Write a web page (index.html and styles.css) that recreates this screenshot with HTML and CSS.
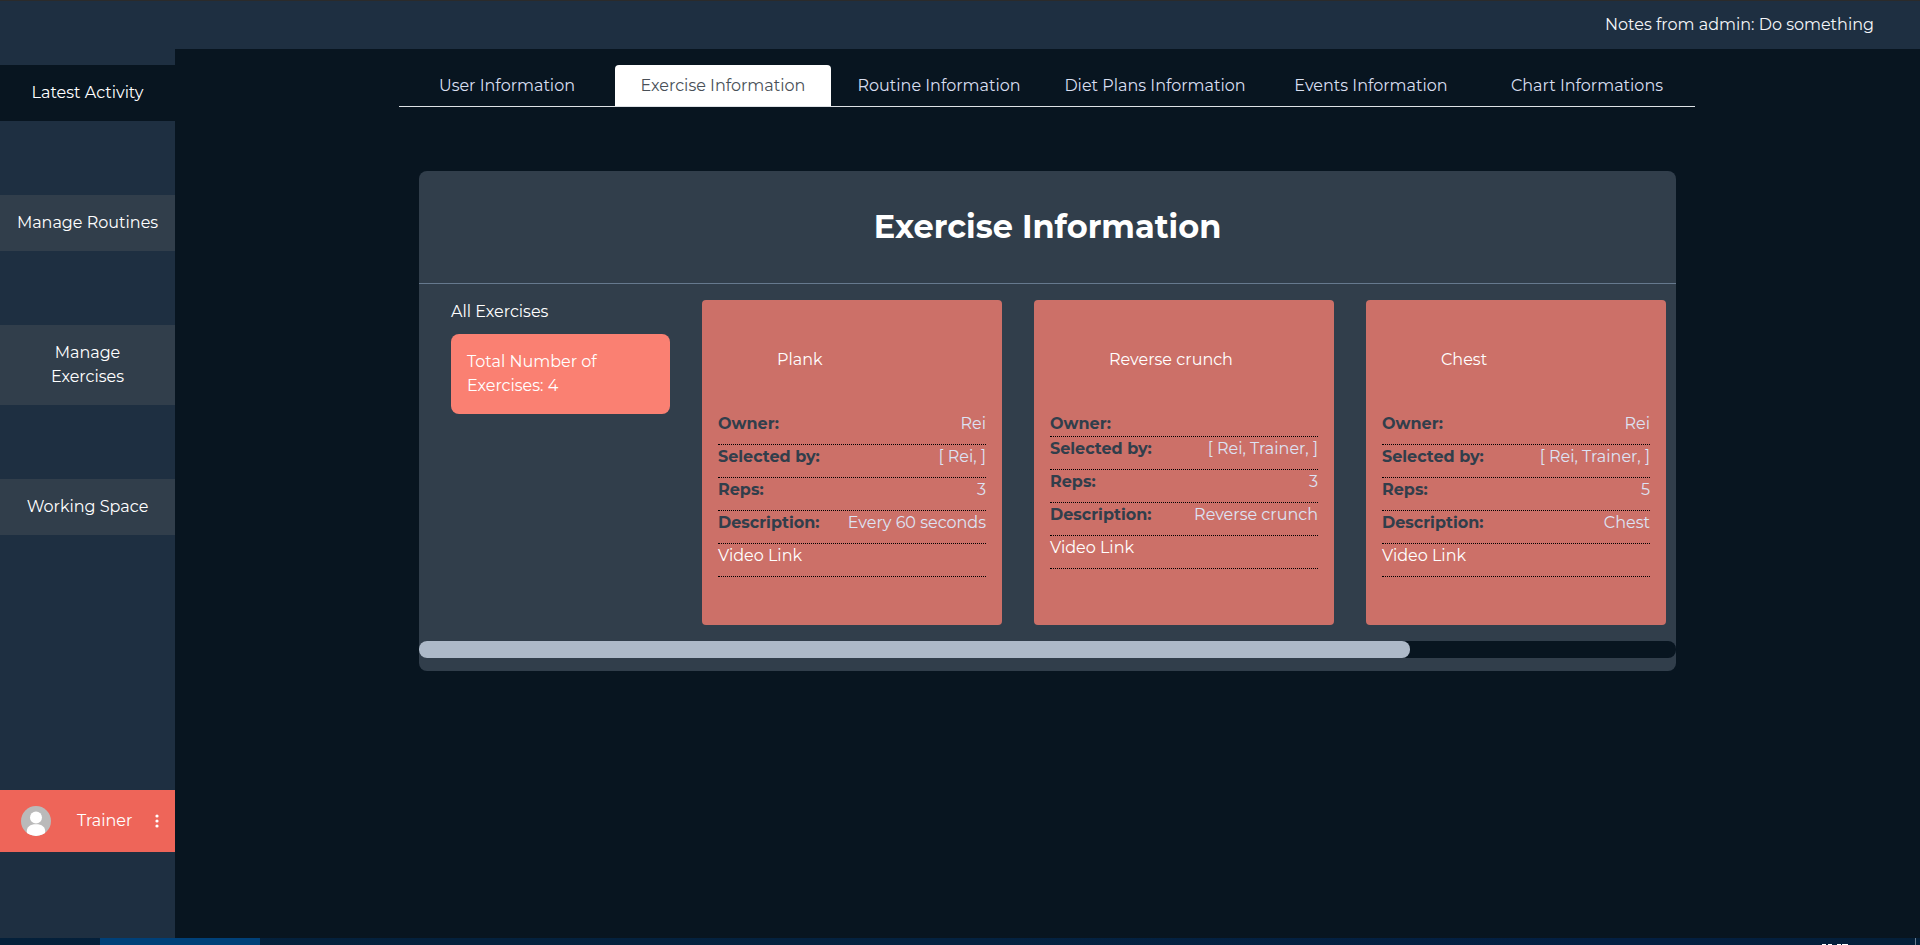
FILE: index.html
```html
<!DOCTYPE html>
<html lang="en">
<head>
<meta charset="utf-8">
<title>Exercise Information</title>
<link rel="stylesheet" href="styles.css">
</head>
<body>
<header class="topbar"><p class="note">Notes from admin: Do something</p></header>
<div class="layout">
  <aside class="sidebar">
    <nav class="menu">
      <a class="menu-item current" href="#">Latest Activity</a>
      <a class="menu-item" href="#">Manage Routines</a>
      <a class="menu-item" href="#">Manage<br>Exercises</a>
      <a class="menu-item" href="#">Working Space</a>
    </nav>
    <button class="profile" type="button">
      <svg class="avatar" viewBox="0 0 30 30" aria-hidden="true">
        <defs><clipPath id="face"><circle cx="15" cy="15" r="15"/></clipPath></defs>
        <g clip-path="url(#face)"><rect width="30" height="30" fill="#bababa"/><circle cx="15" cy="11.5" r="6" fill="#fff"/><path d="M5.8 30V25.5C5.8 21 9 18.3 15 18.3S24.200 21 24.200 25.500V30Z" fill="#fff"/></g>
      </svg>
      <span class="profile-name">Trainer</span>
      <svg class="dots" viewBox="0 0 4 14" aria-hidden="true"><circle cx="2" cy="2" r="1.600"/><circle cx="2" cy="7" r="1.600"/><circle cx="2" cy="12" r="1.600"/></svg>
    </button>
  </aside>
  <main class="content">
    <nav class="tabs">
      <a class="tab" href="#">User Information</a>
      <a class="tab active" href="#">Exercise Information</a>
      <a class="tab" href="#">Routine Information</a>
      <a class="tab" href="#">Diet Plans Information</a>
      <a class="tab" href="#">Events Information</a>
      <a class="tab" href="#">Chart Informations</a>
    </nav>
    <section class="panel">
      <h1 class="panel-title">Exercise Information</h1>
      <div class="scroller">
        <div class="summary">
          <h2 class="summary-title">All Exercises</h2>
          <p class="total">Total Number of Exercises: 4</p>
        </div>
        <article class="card">
          <h3 class="card-title">Plank</h3>
          <dl class="facts">
            <div class="fact"><dt>Owner:</dt><dd>Rei</dd></div>
            <div class="fact"><dt>Selected by:</dt><dd>[ Rei, ]</dd></div>
            <div class="fact"><dt>Reps:</dt><dd>3</dd></div>
            <div class="fact"><dt>Description:</dt><dd>Every 60 seconds</dd></div>
          </dl>
          <p class="fact"><a class="video" href="#">Video Link</a></p>
        </article>
        <article class="card">
          <h3 class="card-title">Reverse crunch</h3>
          <dl class="facts">
            <div class="fact no-value"><dt>Owner:</dt></div>
            <div class="fact"><dt>Selected by:</dt><dd>[ Rei, Trainer, ]</dd></div>
            <div class="fact"><dt>Reps:</dt><dd>3</dd></div>
            <div class="fact"><dt>Description:</dt><dd>Reverse crunch</dd></div>
          </dl>
          <p class="fact"><a class="video" href="#">Video Link</a></p>
        </article>
        <article class="card">
          <h3 class="card-title">Chest</h3>
          <dl class="facts">
            <div class="fact"><dt>Owner:</dt><dd>Rei</dd></div>
            <div class="fact"><dt>Selected by:</dt><dd>[ Rei, Trainer, ]</dd></div>
            <div class="fact"><dt>Reps:</dt><dd>5</dd></div>
            <div class="fact"><dt>Description:</dt><dd>Chest</dd></div>
          </dl>
          <p class="fact"><a class="video" href="#">Video Link</a></p>
        </article>
      </div>
      <div class="scroll-track"><div class="scroll-thumb"></div></div>
    </section>
  </main>
</div>
<footer class="taskbar">
  <span class="task-active"></span>
  <svg class="clock" viewBox="0 0 26 1" aria-hidden="true"><path d="M0 0h4v1H0zM6 0h4v1H6zM15 0h4v1h-4zM20 0h6v1h-6z"/></svg>
  <span class="desktop-edge"></span>
</footer>
</body>
</html>
```
FILE: styles.css
```css
* { box-sizing: border-box; }
body {
  margin: 0;
  min-height: 100vh;
  display: flex;
  flex-direction: column;
  background: #081520;
  color: #fff;
  font: 16px/24px Montserrat, Inter, sans-serif;
}
h1, h2, h3, p, dl, dd { margin: 0; }
a { color: inherit; text-decoration: none; }
.topbar {
  display: flex;
  justify-content: flex-end;
  padding: 12px 46px;
  background: #1e2f41;
  border-top: 1px solid #2b2b2b;
}
.note { color: #f4f5f8; }
.layout { flex: 1; display: flex; }
.sidebar {
  flex: none;
  width: 175px;
  display: flex;
  flex-direction: column;
  justify-content: space-between;
  padding: 16px 0 86px;
  background: #1e2f41;
}
.menu { display: flex; flex-direction: column; gap: 74px; }
.menu-item {
  padding: 16px;
  background: #313e4b;
  text-align: center;
}
.current { background: #081520; }
.profile {
  display: flex;
  align-items: center;
  padding: 16px 16px 16px 21px;
  border: 0;
  background: #ee6559;
  color: #fff;
  font: inherit;
}
.profile-name { margin: 0 auto 0 26px; }
.avatar { width: 30px; height: 30px; }
.dots { width: 4px; height: 14px; fill: #fff; }
.content { flex: 1; min-width: 0; padding: 16px 225px 0 224px; }
.tabs { display: flex; border-bottom: 1px solid #dee2e6; }
.tab {
  flex: 1;
  padding: 9px 0 8px;
  border-radius: 4px 4px 0 0;
  color: #d9dff0;
  text-align: center;
  white-space: nowrap;
}
.active { background: #fff; color: #495057; }
.panel {
  margin: 64px 19px 0 20px;
  padding-bottom: 13px;
  background: #313e4b;
  border-radius: 8px;
}
.panel-title {
  padding: 36px 0;
  border-bottom: 1px solid #66798e;
  font-size: 32px;
  line-height: 40px;
  text-align: center;
}
.scroller {
  display: flex;
  gap: 32px;
  padding: 16px 0 16px 32px;
  overflow: hidden;
}
.scroll-track { background: #081520; border-radius: 8px; }
.scroll-thumb {
  width: 78.8%;
  height: 17px;
  background: #adb9c8;
  border-radius: 8px;
}
.summary { flex: none; width: 219px; }
.summary-title { margin-bottom: 10px; font: inherit; }
.total { padding: 16px; background: #fa8072; border-radius: 8px; }
.card {
  flex: none;
  width: 300px;
  min-height: 325px;
  padding: 48px 16px;
  background: #cc7068;
  border-radius: 4px;
}
.card-title { margin: 0 0 40px 59px; font: inherit; }
.fact {
  display: flex;
  justify-content: space-between;
  padding-bottom: 8px;
  border-bottom: 1px dotted #000;
}
.no-value { padding-bottom: 0; }
.fact dt { color: #313e4b; font-weight: 700; }
.fact dd { color: #dde3f4; }
.taskbar {
  display: flex;
  align-items: flex-end;
  height: 7px;
  padding: 0 4px 0 100px;
  background: linear-gradient(90deg, #04203a, #042240 50%, #031f42 85%, #041f38);
}
.task-active { width: 160px; height: 7px; background: #004078; }
.clock { width: 26px; height: 1px; margin: 0 67px 0 auto; fill: #fff; }
.desktop-edge { width: 1px; height: 7px; background: #6a7c8e; }
```
